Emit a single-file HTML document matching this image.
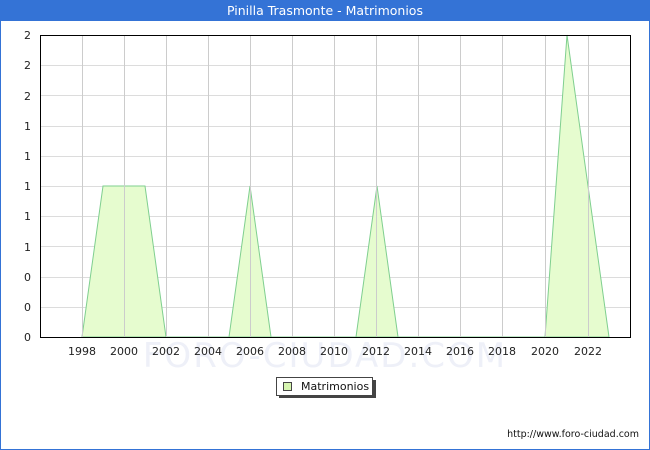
<!DOCTYPE html>
<html><head><meta charset="utf-8"><style>
html,body{margin:0;padding:0;background:#fff;}
svg{display:block;font-family:"DejaVu Sans","Liberation Sans",sans-serif;}
</style></head><body>
<svg width="650" height="450" viewBox="0 0 650 450" xmlns="http://www.w3.org/2000/svg">
<rect x="0.5" y="0.5" width="649" height="449" fill="#fff" stroke="#3473d6"/>
<rect x="0" y="0" width="650" height="21" fill="#3473d6"/>
<text x="325" y="15" text-anchor="middle" fill="#fff" font-size="12.5">Pinilla Trasmonte - Matrimonios</text>
<g stroke="#dcdcdc" stroke-width="1">
<line x1="40" y1="65.5" x2="630" y2="65.5"/><line x1="40" y1="95.5" x2="630" y2="95.5"/>
<line x1="40" y1="126.5" x2="630" y2="126.5"/><line x1="40" y1="156.5" x2="630" y2="156.5"/>
<line x1="40" y1="186.5" x2="630" y2="186.5"/><line x1="40" y1="216.5" x2="630" y2="216.5"/>
<line x1="40" y1="246.5" x2="630" y2="246.5"/><line x1="40" y1="277.5" x2="630" y2="277.5"/>
<line x1="40" y1="307.5" x2="630" y2="307.5"/>
</g>
<text x="325" y="367" text-anchor="middle" font-size="34" fill="#eef0f8" letter-spacing="2">FORO-CIUDAD.COM</text>
<polygon points="82,337 103,186 145,186 166,337 229,337 250,186 271,337 356,337 377,186 398,337 545,337 567,35 609,337" fill="#e6fccf" stroke="#7fcf8f" stroke-width="1"/>
<g stroke="#cccccc" stroke-width="1">
<line x1="82.5" y1="35" x2="82.5" y2="337"/><line x1="124.5" y1="35" x2="124.5" y2="337"/>
<line x1="166.5" y1="35" x2="166.5" y2="337"/><line x1="208.5" y1="35" x2="208.5" y2="337"/>
<line x1="250.5" y1="35" x2="250.5" y2="337"/><line x1="292.5" y1="35" x2="292.5" y2="337"/>
<line x1="334.5" y1="35" x2="334.5" y2="337"/><line x1="376.5" y1="35" x2="376.5" y2="337"/>
<line x1="418.5" y1="35" x2="418.5" y2="337"/><line x1="460.5" y1="35" x2="460.5" y2="337"/>
<line x1="502.5" y1="35" x2="502.5" y2="337"/><line x1="545.5" y1="35" x2="545.5" y2="337"/>
<line x1="588.5" y1="35" x2="588.5" y2="337"/>
</g>
<rect x="40.5" y="35.5" width="590" height="302" fill="none" stroke="#000"/>
<g font-size="11" fill="#222" text-anchor="end">
<text x="31" y="39">2</text><text x="31" y="69">2</text><text x="31" y="100">2</text>
<text x="31" y="130">1</text><text x="31" y="160">1</text><text x="31" y="190">1</text>
<text x="31" y="220">1</text><text x="31" y="251">1</text><text x="31" y="281">0</text>
<text x="31" y="311">0</text><text x="31" y="341">0</text>
</g>
<g font-size="11" fill="#222" text-anchor="middle">
<text x="82" y="355">1998</text><text x="124" y="355">2000</text><text x="166" y="355">2002</text>
<text x="208" y="355">2004</text><text x="250" y="355">2006</text><text x="292" y="355">2008</text>
<text x="334" y="355">2010</text><text x="376" y="355">2012</text><text x="418" y="355">2014</text>
<text x="460" y="355">2016</text><text x="502" y="355">2018</text><text x="545" y="355">2020</text>
<text x="588" y="355">2022</text>
</g>
<rect x="279" y="380" width="97" height="18" fill="#444"/>
<rect x="276.5" y="377.5" width="96" height="18" fill="#fff" stroke="#444"/>
<rect x="283.5" y="382.5" width="8" height="8" fill="#d6f5b0" stroke="#444"/>
<text x="301" y="390" font-size="11" fill="#111">Matrimonios</text>
<text x="639" y="437" text-anchor="end" font-size="9.5" fill="#111">http://www.foro-ciudad.com</text>
</svg>
</body></html>
